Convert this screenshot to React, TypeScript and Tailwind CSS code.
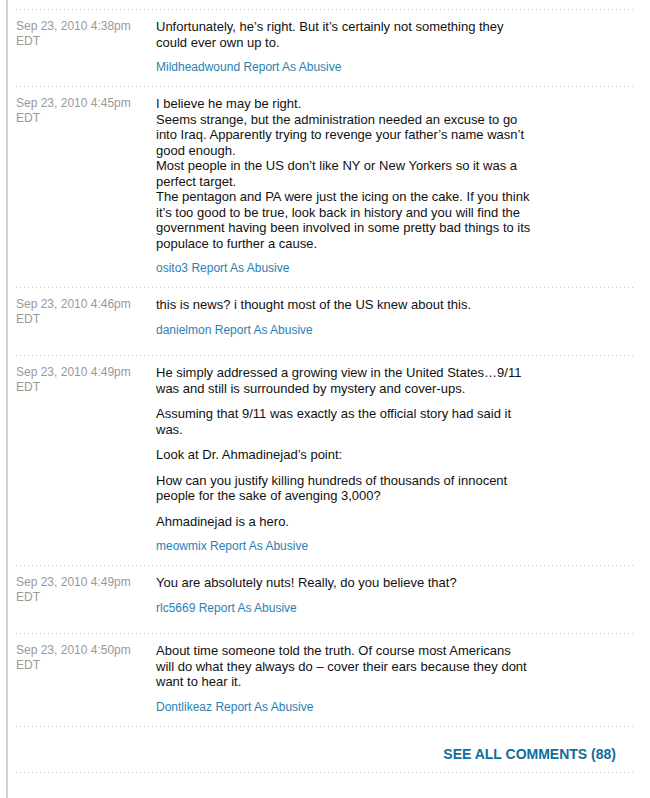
import React from 'react';

type Comment = {
  time: string;
  author: string;
  paras: string[][];
};

const comments: Comment[] = [
  {
    time: 'Sep 23, 2010 4:38pm',
    author: 'Mildheadwound',
    paras: [["Unfortunately, he’s right. But it’s certainly not something they could ever own up to."]],
  },
  {
    time: 'Sep 23, 2010 4:45pm',
    author: 'osito3',
    paras: [
      [
        'I believe he may be right.',
        'Seems strange, but the administration needed an excuse to go into Iraq. Apparently trying to revenge your father’s name wasn’t good enough.',
        'Most people in the US don’t like NY or New Yorkers so it was a perfect target.',
        'The pentagon and PA were just the icing on the cake. If you think it’s too good to be true, look back in history and you will find the government having been involved in some pretty bad things to its populace to further a cause.',
      ],
    ],
  },
  {
    time: 'Sep 23, 2010 4:46pm',
    author: 'danielmon',
    paras: [['this is news? i thought most of the US knew about this.']],
  },
  {
    time: 'Sep 23, 2010 4:49pm',
    author: 'meowmix',
    paras: [
      ['He simply addressed a growing view in the United States…9/11 was and still is surrounded by mystery and cover-ups.'],
      ['Assuming that 9/11 was exactly as the official story had said it was.'],
      ['Look at Dr. Ahmadinejad’s point:'],
      ['How can you justify killing hundreds of thousands of innocent people for the sake of avenging 3,000?'],
      ['Ahmadinejad is a hero.'],
    ],
  },
  {
    time: 'Sep 23, 2010 4:49pm',
    author: 'rlc5669',
    paras: [['You are absolutely nuts! Really, do you believe that?']],
  },
  {
    time: 'Sep 23, 2010 4:50pm',
    author: 'Dontlikeaz',
    paras: [['About time someone told the truth. Of course most Americans will do what they always do – cover their ears because they dont want to hear it.']],
  },
];

// dotted rule between comments
const Rule = () => (
  <div className="h-px w-full bg-[linear-gradient(to_right,#c8c8c8_1px,transparent_1px)] bg-[length:4px_1px] bg-repeat-x" />
);

const CommentRow = ({ c }: { c: Comment }) => (
  <div className="flex pt-[9px] pb-[11px]">
    <div className="w-[140px] shrink-0 pr-[16px] text-[12px] leading-[15px] text-[#999999]">
      {c.time} EDT
    </div>
    <div className="min-h-[47px] w-[375px] text-[13px] leading-[15.5px] text-[#111111]">
      {c.paras.map((lines, i) => (
        <p key={i} className="mb-[10px] last:mb-0">
          {lines.map((l, j) => (
            <React.Fragment key={j}>
              {j > 0 && <br />}
              {l}
            </React.Fragment>
          ))}
        </p>
      ))}
      <div className="mt-[10px] text-[12px] leading-[15px] text-[#2a7fb4]">
        <a href="#">{c.author}</a> <a href="#">Report As Abusive</a>
      </div>
    </div>
  </div>
);

export default function App() {
  return (
    <div className="min-h-[798px] bg-white font-['Liberation_Sans',Arial,sans-serif]">
      <div className="ml-[6px] min-h-[798px] border-l-2 border-[#d2d2d2] pl-[8px] pt-[9px]">
        <div className="w-[617px]">
          {comments.map((c, i) => (
            <div key={i}>
              <Rule />
              <CommentRow c={c} />
            </div>
          ))}
          <Rule />
          <div className="flex justify-end pt-[19px] pb-[10px] pr-[17px]">
            <a href="#" className="text-[14px] font-bold leading-[16px] text-[#0f6d9c] uppercase">
              See all comments (88)
            </a>
          </div>
          <Rule />
        </div>
      </div>
    </div>
  );
}
